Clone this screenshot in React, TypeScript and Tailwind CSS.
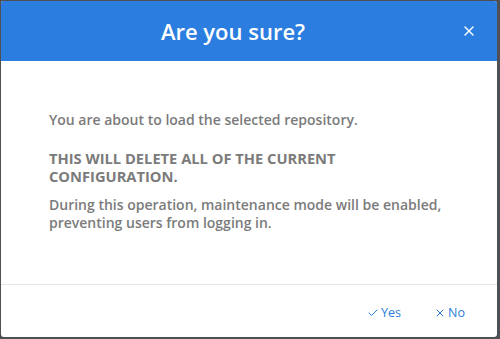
import { Check, X } from "lucide-react";

export default function App() {
  return (
    <div className="w-[500px] h-[339px] bg-[#4d5156] p-px pr-[3px] pb-[2px] font-['Open_Sans',sans-serif]">
      <div className="flex h-full flex-col overflow-hidden rounded-[3px] bg-white">
        <div className="relative flex h-[60px] items-center justify-center bg-[#2b7de0] pr-[32px]">
          <h1 className="text-[22px] font-semibold text-white">Are you sure?</h1>
          <button className="absolute right-[20px] top-[22px] text-white">
            <X size={16} strokeWidth={2} />
          </button>
        </div>
        <div className="flex flex-1 flex-col px-12 pt-[50px] text-[14px] font-semibold leading-[18px] text-[#7b7b7b]">
          <p>You are about to load the selected repository.</p>
          <p className="mt-[20px] text-[14.7px] font-bold">
            THIS WILL DELETE ALL OF THE CURRENT
            <br />
            CONFIGURATION.
          </p>
          <p className="mt-[11px]">
            During this operation, maintenance mode will be enabled,
            <br />
            preventing users from logging in.
          </p>
        </div>
        <div className="flex h-[53px] items-center justify-end gap-[33px] border-t border-[#e5e5e5] pr-[32px] pt-[4px] text-[12.5px] text-[#2b7de0]">
          <button className="flex items-center gap-[2px]">
            <Check size={12} strokeWidth={2} />
            Yes
          </button>
          <button className="flex items-center gap-[2px]">
            <X size={12} strokeWidth={2} />
            No
          </button>
        </div>
      </div>
    </div>
  );
}
